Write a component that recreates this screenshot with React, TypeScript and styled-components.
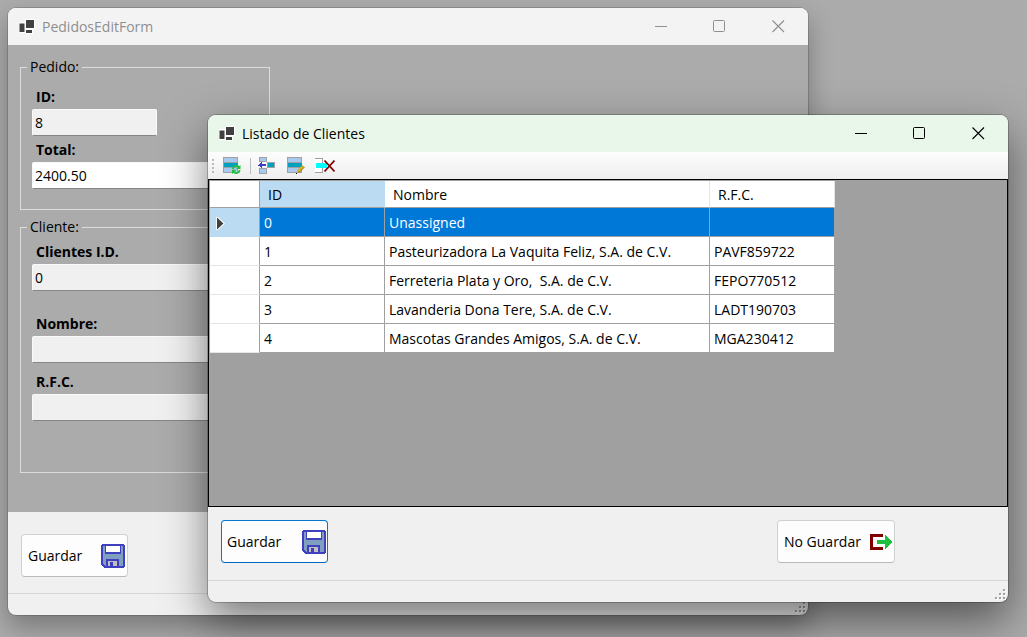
import React from "react";
import styled, { createGlobalStyle, css } from "styled-components";

const GlobalStyle = createGlobalStyle`
  *, *::before, *::after { box-sizing: border-box; }
  body {
    margin: 0;
    background: #ababab;
    color: #000;
    font: 14px/20px "Open Sans", "Noto Sans", sans-serif;
  }
  button, input { font: inherit; color: inherit; }
`;

const Desktop = styled.div`
  position: relative;
  min-height: 100vh;
  overflow: hidden;
`;

const Window = styled.section<{ $active?: boolean }>`
  position: absolute;
  top: ${(p) => (p.$active ? 115 : 8)}px;
  left: ${(p) => (p.$active ? 208 : 8)}px;
  right: ${(p) => (p.$active ? 19 : 219)}px;
  overflow: hidden;
  border-radius: 8px;
  background: #f0f0f0;
  box-shadow: ${(p) =>
    p.$active
      ? "0 0 0 1px rgba(0,0,0,.22), 0 18px 44px rgba(0,0,0,.5)"
      : "0 0 0 1px rgba(0,0,0,.15), 0 12px 26px rgba(0,0,0,.3)"};
`;

const TitleBar = styled.header<{ $active?: boolean }>`
  display: flex;
  align-items: center;
  height: 37px;
  padding-left: 11px;
  background: ${(p) => (p.$active ? "#e9f7eb" : "#f3f3f3")};
  color: ${(p) => (p.$active ? "#000" : "#8f8f8f")};
`;

const Title = styled.h1`
  flex: 1;
  margin: 0 0 0 7px;
  font-size: 14px;
  font-weight: 400;
`;

const CaptionButton = styled.button`
  display: flex;
  align-items: center;
  justify-content: center;
  width: 59px;
  height: 37px;
  padding: 0;
  border: 0;
  background: none;
`;

const FormBody = styled.form`
  display: flex;
  flex-direction: column;
  gap: 7px;
  padding: 12px 12px 39px;
  background: #ababab;
`;

const Group = styled.fieldset<{ $top: number; $bottom: number }>`
  width: 250px;
  min-width: 0;
  margin: 0;
  padding: ${(p) => p.$top}px 11px ${(p) => p.$bottom}px;
  border: 1px solid #dcdcdc;
`;

const Legend = styled.legend`
  margin-left: -5px;
  padding: 0 3px;
`;

const Field = styled.div<{ $gap?: number }>`
  display: flex;
  flex-direction: column;
  gap: 2px;
  margin-top: ${(p) => p.$gap ?? 0}px;
`;

const Label = styled.label`
  padding-left: 4px;
  font-weight: 700;
`;

const TextBox = styled.input<{ $short?: boolean }>`
  width: ${(p) => (p.$short ? "125px" : "100%")};
  height: 27px;
  padding: 0 2px;
  border: 1px solid #fafafa;
  border-bottom-color: #868686;
  border-radius: 2px;
  outline: 0;
  background: ${(p) => (p.readOnly ? "#f0f0f0" : "#fff")};
`;

const Toolbar = styled.div`
  display: flex;
  align-items: center;
  height: 27px;
  padding: 0 4px;
  background: linear-gradient(#fdfdfd, #eeeeee);
`;

const ToolButton = styled.button`
  display: flex;
  align-items: center;
  justify-content: center;
  width: 29px;
  height: 25px;
  padding: 0;
  border: 0;
  background: none;
`;

const Separator = styled.span`
  width: 1px;
  height: 16px;
  margin: 0 1px 0 3px;
  background: #bdbdbd;
`;

const GridArea = styled.div`
  height: 328px;
  border: 1px solid #000;
  padding: 1px 0 0 1px;
  background: #a0a0a0;
`;

const Grid = styled.table`
  table-layout: fixed;
  width: 625px;
  border-spacing: 0;
  background: #fff;
`;

const HeadCell = styled.th<{ $width: number; $marked?: boolean }>`
  width: ${(p) => p.$width}px;
  height: 27px;
  padding: 2px 8px 0;
  border-right: 1px solid ${(p) => (p.$marked ? "#bbdbf2" : "#e5e5e5")};
  border-bottom: 1px solid #a0a0a0;
  background: ${(p) => (p.$marked ? "#bbdbf2" : "#fff")};
  font-weight: 400;
  text-align: left;
  &:first-child { border-right-color: #a0a0a0; }
`;

const RowHead = styled.th<{ $selected: boolean }>`
  padding: 2px 6px 0;
  border-right: 1px solid #a0a0a0;
  border-bottom: 1px solid ${(p) => (p.$selected ? "#bbdbf2" : "#e5e5e5")};
  background: ${(p) => (p.$selected ? "#bbdbf2" : "#fff")};
  text-align: left;
  svg { display: block; }
`;

const Cell = styled.td<{ $selected: boolean }>`
  height: 29px;
  padding: 2px 4px 0;
  border-right: 1px solid #a0a0a0;
  border-bottom: 1px solid #a0a0a0;
  white-space: pre;
  ${(p) => p.$selected && css`background: #0078d7; color: #fff;`}
`;

const Actions = styled.div<{ $active?: boolean }>`
  display: flex;
  justify-content: space-between;
  padding: ${(p) => (p.$active ? "13px 113px 17px 13px" : "22px 13px 16px")};
`;

const PushButton = styled.button<{ $width: number; $primary?: boolean }>`
  display: flex;
  align-items: center;
  justify-content: space-between;
  width: ${(p) => p.$width}px;
  height: 43px;
  padding: ${(p) => (p.$primary ? "0 1px 0 5px" : "0 2px 0 6px")};
  border: 1px solid ${(p) => (p.$primary ? "#0078d4" : "#d0d0d0")};
  border-bottom-color: ${(p) => (p.$primary ? "#0067c0" : "#bababa")};
  border-radius: 4px;
  background: #fdfdfd;
  white-space: nowrap;
`;

const StatusBar = styled.footer`
  display: flex;
  align-items: flex-end;
  justify-content: flex-end;
  height: 22px;
  padding: 0 1px 1px;
  border-top: 1px solid #d7d7d7;
`;

const AppIcon = () => (
  <svg width="16" height="16" viewBox="0 0 16 16" aria-hidden="true">
    <path fill="#fff" d="M6 0h10v10H6zM0 3h6v11H0zM6 10h8v5H6z" />
    <path fill="#404040" d="M7 1h8v8H7zM.5 4.500h5V13h-5zM7 11h6v3H7z" />
  </svg>
);

const CaptionIcon = ({ kind, active }: { kind: "min" | "max" | "close"; active?: boolean }) => (
  <svg width="13" height="13" viewBox="0 0 13 13" fill="none" stroke={active ? "#000" : "#8f8f8f"} aria-hidden="true">
    {kind === "min" && <path d="M1 6.500h12" />}
    {kind === "max" && <rect x=".5" y=".5" width="11" height="11" rx="1" />}
    {kind === "close" && <path strokeWidth="1.100" d="M.5.5l11.500 11.500M12 .5L.5 12" />}
  </svg>
);

const CaptionButtons = ({ active }: { active?: boolean }) => (
  <>
    <CaptionButton type="button" aria-label="Minimizar"><CaptionIcon kind="min" active={active} /></CaptionButton>
    <CaptionButton type="button" aria-label="Maximizar"><CaptionIcon kind="max" active={active} /></CaptionButton>
    <CaptionButton type="button" aria-label="Cerrar"><CaptionIcon kind="close" active={active} /></CaptionButton>
  </>
);

const FloppyIcon = () => (
  <svg width="24" height="24" viewBox="0 0 24 24" shapeRendering="crispEdges" aria-hidden="true">
    <path fill="#3f3fbf" d="M1 0h22v1h1v22h-1v1H3v-1H2v-1H1v-1H0V1h1z" />
    <path fill="#7f9fbf" d="M2 2h20v20H4v-1H3v-1H2z" />
    <path fill="#3f3fbf" d="M4 1h16v9H4z" />
    <path fill="#fff" d="M5 2h14v6H5z" />
    <path fill="#3f3fbf" d="M5 15h13v8H5z" />
    <path fill="#c0c0c0" d="M7 17h9v5H7z" />
    <path fill="#3f3fbf" d="M9 18h3v5H9z" />
  </svg>
);

const ExitIcon = () => (
  <svg width="22" height="18" viewBox="0 0 22 18" shapeRendering="crispEdges" aria-hidden="true">
    <path fill="#800000" d="M0 1h13v3H3v10h10v3H0z" />
    <path fill="#1fbf3f" d="M7 7h8V2h1v1h1v1h1v1h1v1h1v1h1v1h1v2h-1v1h-1v1h-1v1h-1v1h-1v1h-1v1h-1v-5H7z" />
  </svg>
);

const Sheet = () => (
  <>
    <path fill="#a0a0a0" d="M0 0h15v16H0z" />
    <path fill="#a8c8f0" d="M1 1h13v4H1zM1 11h13v4H1z" />
    <path fill="#00a0c0" d="M1 6h14v4H1z" />
  </>
);

const RefreshRowsIcon = () => (
  <svg width="19" height="17" viewBox="0 0 19 17" aria-hidden="true">
    <g shapeRendering="crispEdges"><Sheet /></g>
    <path fill="none" stroke="#1fbf3f" strokeWidth="1.800" d="M9.800 12c.6-3.600 4.400-4 6.200-2M16.800 13c-.8 3.400-4.400 4-6.200 1.800" />
    <path fill="#1fbf3f" d="M17.500 8v4h-4.500zM9 17v-4.200h4.500z" />
  </svg>
);

const InsertRowIcon = () => (
  <svg width="17" height="17" viewBox="0 0 17 17" shapeRendering="crispEdges" aria-hidden="true">
    <path fill="#a0a0a0" d="M1 0h8v5H1zM9 5h8v6H9zM1 11h8v6H1z" />
    <path fill="#a8c8f0" d="M2 1h6v3H2zM2 12h6v4H2z" />
    <path fill="#00a0c0" d="M10 6h6v4h-6z" />
    <path fill="#3f3fbf" d="M0 8h1V7h1V6h1V5h1v2h4v2H4v2H3v-1H2V9H0z" />
  </svg>
);

const EditRowIcon = () => (
  <svg width="18" height="17" viewBox="0 0 18 17" aria-hidden="true">
    <g shapeRendering="crispEdges"><Sheet /></g>
    <path stroke="#d8b020" strokeWidth="2.600" d="M10.500 15L16.500 9" />
    <path stroke="#907010" strokeWidth="1" d="M11.500 16L17.500 10" />
    <path fill="#000" d="M9 16h1v1H9z" />
  </svg>
);

const DeleteRowIcon = () => (
  <svg width="20" height="17" viewBox="0 0 20 17" aria-hidden="true">
    <g shapeRendering="crispEdges">
      <path fill="#fff" d="M0 1h8v14H0z" />
      <path fill="#a0a0a0" d="M0 1h8v5H7V2H0zM7 11h1v5H0v-1h7z" />
      <path fill="#00ffff" d="M1 6h11v5H1z" />
    </g>
    <path stroke="#800000" strokeWidth="1.800" d="M9.500 3.500l10 11M19.500 3.500l-10 11" />
  </svg>
);

const GripIcon = styled.svg`
  margin-right: 1px;
`;

const ToolbarGrip = () => (
  <GripIcon width="5" height="16" viewBox="0 0 5 16" shapeRendering="crispEdges" aria-hidden="true">
    <path fill="#bcbcbc" d="M0 1h2v2H0zM0 5h2v2H0zM0 9h2v2H0zM0 13h2v2H0z" />
  </GripIcon>
);

const SizeGrip = () => (
  <svg width="12" height="12" viewBox="0 0 12 12" shapeRendering="crispEdges" aria-hidden="true">
    <path fill="#fff" d="M9 1h2v2H9zM5 5h2v2H5zM9 5h2v2H9zM1 9h2v2H1zM5 9h2v2H5zM9 9h2v2H9z" />
    <path fill="#a0a0a0" d="M8 0h2v2H8zM4 4h2v2H4zM8 4h2v2H8zM0 8h2v2H0zM4 8h2v2H4zM8 8h2v2H8z" />
  </svg>
);

const rows: [string, string, string][] = [
  ["0", "Unassigned", ""],
  ["1", "Pasteurizadora La Vaquita Feliz, S.A. de C.V.", "PAVF859722"],
  ["2", "Ferreteria Plata y Oro,  S.A. de C.V.", "FEPO770512"],
  ["3", "Lavanderia Dona Tere, S.A. de C.V.", "LADT190703"],
  ["4", "Mascotas Grandes Amigos, S.A. de C.V.", "MGA230412"],
];

export default function App() {
  return (
    <Desktop>
      <GlobalStyle />
      <Window>
        <TitleBar>
          <AppIcon />
          <Title>PedidosEditForm</Title>
          <CaptionButtons />
        </TitleBar>
        <FormBody>
          <Group $top={10} $bottom={20}>
            <Legend>Pedido:</Legend>
            <Field>
              <Label htmlFor="pedido-id">ID:</Label>
              <TextBox id="pedido-id" defaultValue="8" readOnly $short />
            </Field>
            <Field $gap={4}>
              <Label htmlFor="total">Total:</Label>
              <TextBox id="total" defaultValue="2400.50" />
            </Field>
          </Group>
          <Group $top={5} $bottom={51}>
            <Legend>Cliente:</Legend>
            <Field>
              <Label htmlFor="cliente-id">Clientes I.D.</Label>
              <TextBox id="cliente-id" defaultValue="0" readOnly />
            </Field>
            <Field $gap={23}>
              <Label htmlFor="nombre">Nombre:</Label>
              <TextBox id="nombre" readOnly />
            </Field>
            <Field $gap={9}>
              <Label htmlFor="rfc">R.F.C.</Label>
              <TextBox id="rfc" readOnly />
            </Field>
          </Group>
        </FormBody>
        <Actions>
          <PushButton type="button" $width={107}>Guardar<FloppyIcon /></PushButton>
        </Actions>
        <StatusBar><SizeGrip /></StatusBar>
      </Window>

      <Window $active>
        <TitleBar $active>
          <AppIcon />
          <Title>Listado de Clientes</Title>
          <CaptionButtons active />
        </TitleBar>
        <Toolbar>
          <ToolbarGrip />
          <ToolButton type="button" aria-label="Actualizar"><RefreshRowsIcon /></ToolButton>
          <Separator />
          <ToolButton type="button" aria-label="Insertar"><InsertRowIcon /></ToolButton>
          <ToolButton type="button" aria-label="Editar"><EditRowIcon /></ToolButton>
          <ToolButton type="button" aria-label="Eliminar"><DeleteRowIcon /></ToolButton>
        </Toolbar>
        <GridArea>
          <Grid>
            <thead>
              <tr>
                <HeadCell $width={50} aria-label="Fila" />
                <HeadCell $width={125} $marked>ID</HeadCell>
                <HeadCell $width={325}>Nombre</HeadCell>
                <HeadCell $width={125}>R.F.C.</HeadCell>
              </tr>
            </thead>
            <tbody>
              {rows.map((row, i) => (
                <tr key={row[0]}>
                  <RowHead $selected={i === 0} scope="row">
                    {i === 0 && (
                      <svg width="9" height="13" viewBox="0 0 9 13" aria-hidden="true">
                        <path fill="#fff" d="M0 0h2l7 6.500L2 13H0z" />
                        <path fill="#404040" d="M1 .5l6.500 6-6.500 6z" />
                      </svg>
                    )}
                  </RowHead>
                  {row.map((value, c) => (
                    <Cell key={c} $selected={i === 0}>{value}</Cell>
                  ))}
                </tr>
              ))}
            </tbody>
          </Grid>
        </GridArea>
        <Actions $active>
          <PushButton type="button" $width={107} $primary>Guardar<FloppyIcon /></PushButton>
          <PushButton type="button" $width={118}>No Guardar<ExitIcon /></PushButton>
        </Actions>
        <StatusBar><SizeGrip /></StatusBar>
      </Window>
    </Desktop>
  );
}
